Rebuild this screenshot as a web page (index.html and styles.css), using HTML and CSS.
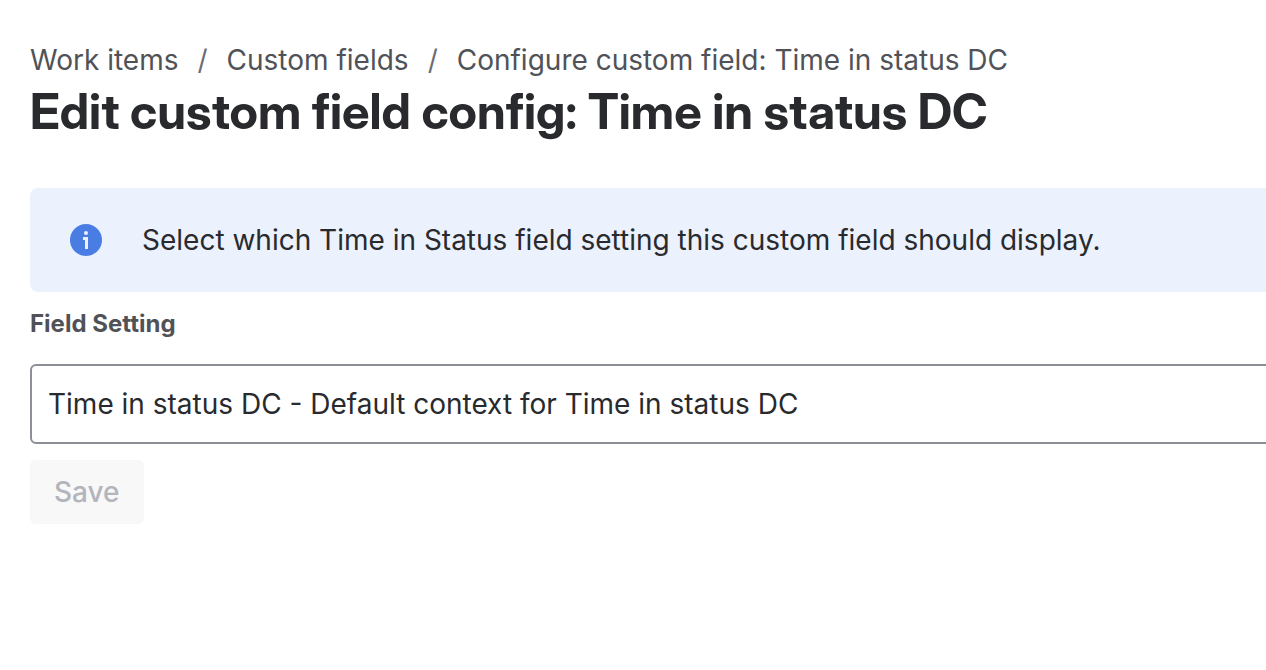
FILE: index.html
```
<!DOCTYPE html>
<html lang="en">
<head>
  <meta charset="UTF-8">
  <title>Edit custom field config</title>
  <link rel="stylesheet" href="styles.css">
</head>
<body>
  <main class="page">
    <nav aria-label="Breadcrumbs">
      <ol class="breadcrumbs">
        <li><a href="#">Work items</a></li>
        <li><a href="#">Custom fields</a></li>
        <li><a href="#">Configure custom field: Time in status DC</a></li>
      </ol>
    </nav>
    <h1>Edit custom field config: Time in status DC</h1>

    <div class="message">
      <svg class="message-icon" viewBox="0 0 32 32" aria-hidden="true">
        <circle cx="16" cy="16" r="16" fill="#4a7de3"/>
        <circle cx="16" cy="9" r="2" fill="#ebf1fd"/>
        <path d="M13 14.5h3.5V25" fill="none" stroke="#ebf1fd" stroke-width="3"/>
      </svg>
      <p>Select which Time in Status field setting this custom field should display.</p>
    </div>

    <form class="config-form">
      <label for="field-setting">Field Setting</label>
      <select id="field-setting">
        <option>Time in status DC - Default context for Time in status DC</option>
      </select>
      <button type="submit" disabled>Save</button>
    </form>
  </main>
</body>
</html>
```
FILE: styles.css
```
* {
  box-sizing: border-box;
}
body {
  margin: 0;
  background: #fff;
  color: #292a2e;
  font-family: Inter, sans-serif;
  font-size: 28px;
  line-height: 40px;
  overflow-x: hidden;
}
/* content runs past the right edge of the window */
.page {
  margin-right: -40px;
  padding: 40px 0 40px 30px;
}
.breadcrumbs {
  display: flex;
  margin: 0;
  padding: 0;
  list-style: none;
}
.breadcrumbs li + li::before {
  content: "/";
  padding: 0 19px;
  color: #6b6e76;
}
.breadcrumbs a {
  color: #505258;
  text-decoration: none;
}
h1 {
  margin: 4px 0 48px;
  font-family: "Inter Display", Inter, sans-serif;
  font-size: 49px;
  line-height: 56px;
  font-weight: 700;
}
.message {
  display: flex;
  align-items: center;
  gap: 40px;
  padding: 32px 40px;
  border-radius: 8px;
  background: #ebf1fd;
}
.message-icon {
  width: 32px;
  height: 32px;
}
.message p {
  margin: 0;
}
.config-form {
  display: flex;
  flex-direction: column;
  align-items: flex-start;
}
.config-form label {
  margin: 16px 0 24px;
  color: #505258;
  font-size: 24px;
  line-height: 32px;
  font-weight: 700;
}
.config-form select {
  width: 100%;
  height: 80px;
  padding: 0 16px;
  border: 2px solid #8c8f97;
  border-radius: 6px;
  background: #fff;
  color: #292a2e;
  font: inherit;
  appearance: none;
}
.config-form button {
  margin-top: 16px;
  padding: 12px 24px;
  border: 0;
  border-radius: 6px;
  background: #f8f8f8;
  color: #b3b5bc;
  font: inherit;
  font-weight: 500;
}
```
